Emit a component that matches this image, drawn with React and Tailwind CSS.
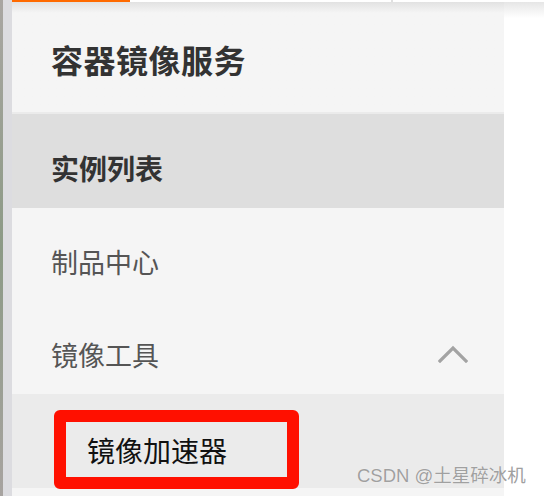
const cjk = { fontFamily: '"Noto Sans CJK SC", "Noto Sans", sans-serif' };

const ChevronUp = () => (
  <svg width="30" height="18" viewBox="0 0 30 18" fill="none">
    <path d="M2 16 L15 3 L28 16" stroke="#a3a3a3" strokeWidth="3.2" strokeLinecap="square" />
  </svg>
);

export default function App() {
  return (
    <div className="w-[544px] h-[496px] flex bg-white overflow-hidden" style={cjk}>
      <div className="w-[3px] bg-gradient-to-b from-[#a9a6a2] via-[#8c9a86] to-[#a7a3a0]" />
      <div className="w-[9px] bg-[#dcdce0]" />
      <div className="w-[492px] flex flex-col bg-[#f5f5f5] relative">
        <div className="h-[2px] flex">
          <div className="w-[118px] bg-[#ff6a00]" />
          <div className="w-[261px] bg-white" />
          <div className="w-[2px] bg-[#e0e0e0]" />
          <div className="flex-1 bg-white" />
        </div>
        <div className="h-[110px] flex items-center pl-[39px] pt-[4px] bg-gradient-to-b from-[#e2e2e2] via-[#f5f5f5] via-[10%] to-[#f5f5f5]">
          <span className="text-[32px] font-bold text-[#333] leading-none tracking-[0.5px]">容器镜像服务</span>
        </div>
        <div className="h-[2px] bg-[#ebebeb]" />
        <div className="h-[94px] flex items-center pl-[39px] pt-[14px] bg-[#dedede]">
          <span className="text-[28px] font-bold text-[#333] leading-none">实例列表</span>
        </div>
        <div className="h-[92px] flex items-center pl-[39px] pt-[14px]">
          <span className="text-[27px] text-[#555] leading-none">制品中心</span>
        </div>
        <div className="h-[94px] flex items-center justify-between pl-[39px] pr-[36px] pt-[14px]">
          <span className="text-[27px] text-[#555] leading-none">镜像工具</span>
          <ChevronUp />
        </div>
        <div className="h-[94px] bg-[#ebebeb] pt-[16px] pl-[42px]">
          <div className="w-[245px] h-[79px] border-[12px] border-[#ff1000] rounded-[6px] flex items-center pl-[21px]">
            <span className="text-[28px] text-[#111] leading-none">镜像加速器</span>
          </div>
        </div>
        <div className="flex-1" />
      </div>
      <div className="flex-1 flex flex-col">
        <div className="h-[2px] bg-white" />
        <div className="h-[16px] bg-gradient-to-b from-[#e6e6e6] to-white" />
      </div>
      <div className="absolute left-[357px] top-[467px] text-[18.5px] text-[#a0a0a0] leading-none whitespace-nowrap [text-shadow:0_0_1px_#fff]" style={{ fontFamily: '"Liberation Sans", "Noto Sans CJK SC", sans-serif' }}>
        CSDN @土星碎冰机
      </div>
    </div>
  );
}
